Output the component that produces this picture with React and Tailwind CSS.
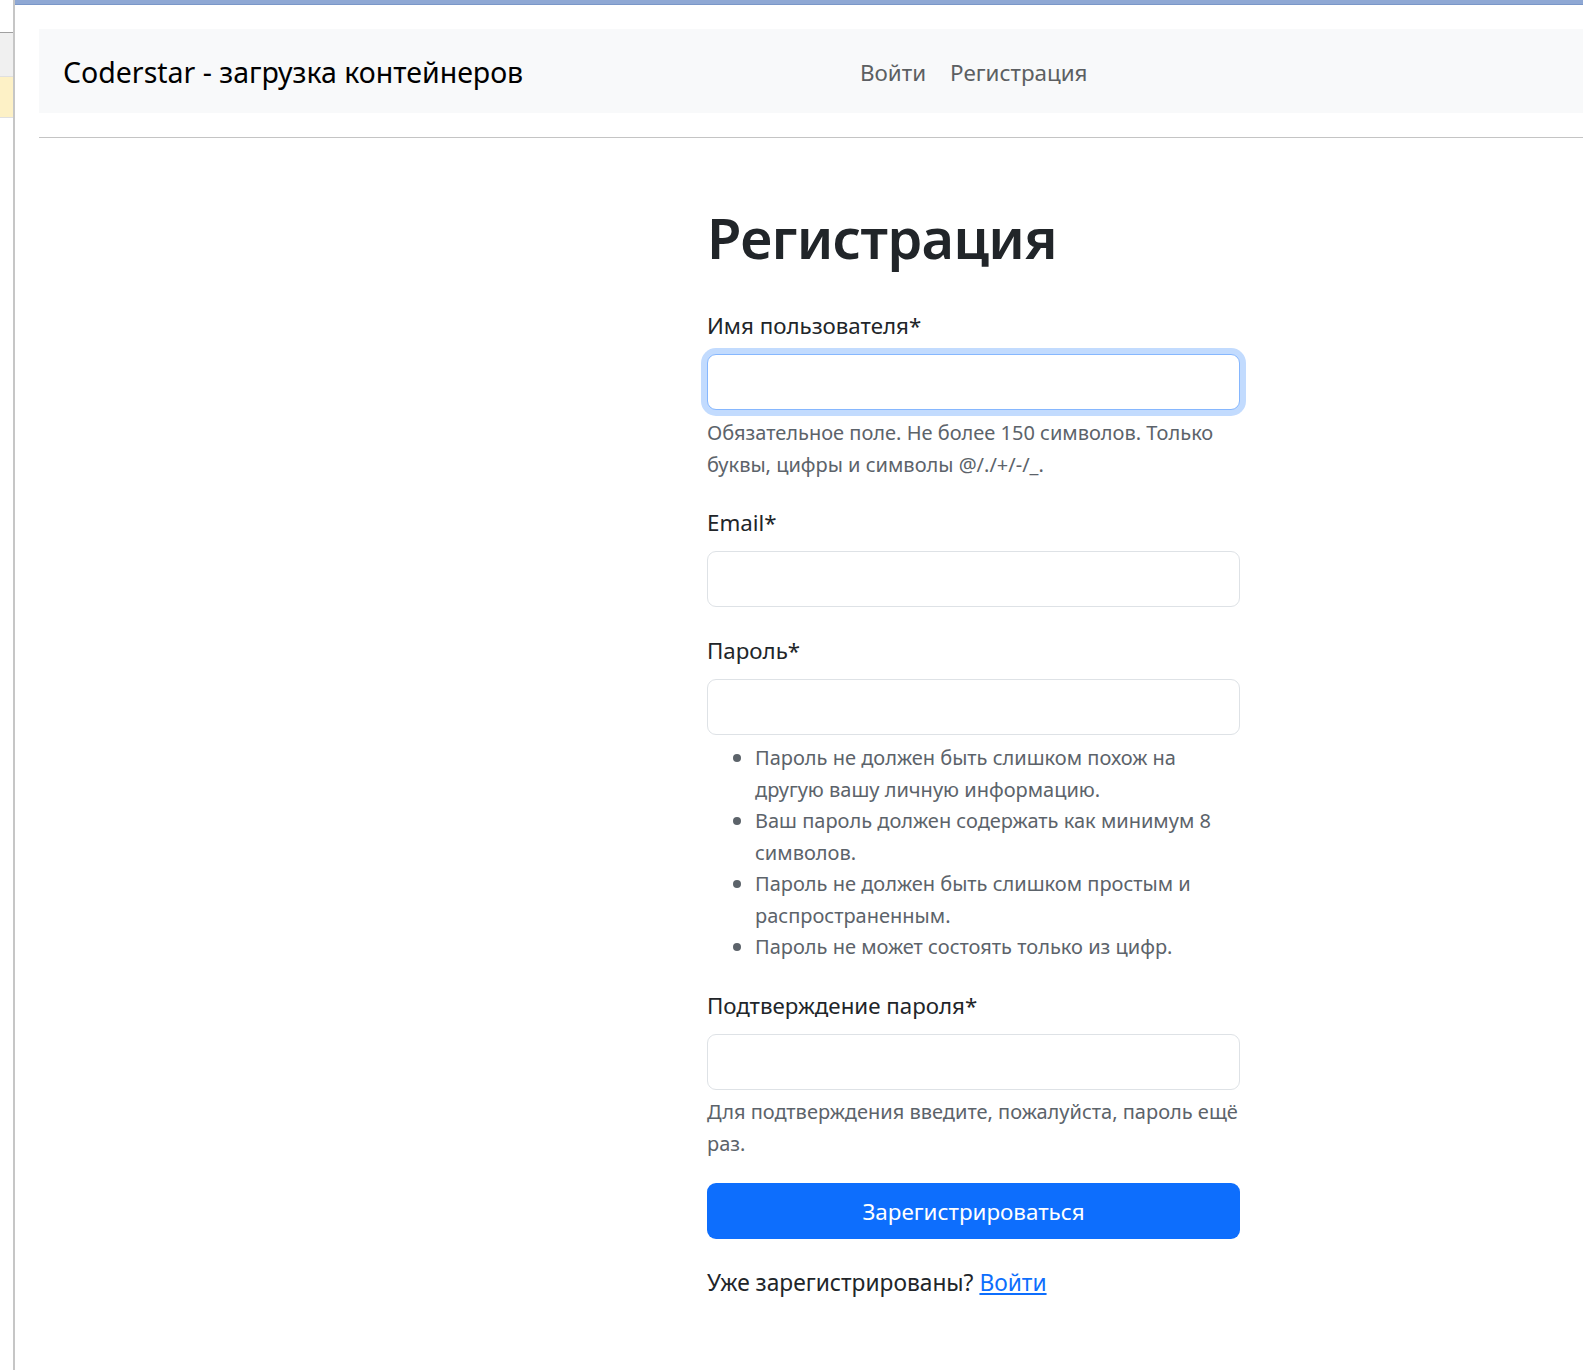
function Field({ label, focused, className = "" }) {
  return (
    <div className={className}>
      <label className="block text-[22.3px] leading-[40px] mb-[8px] text-[#212529]">{label}</label>
      <input
        className={
          focused
            ? "block w-full h-[56px] bg-white rounded-[9px] border border-[#86b7fe] shadow-[0_0_0_6px_#c2dbfe] outline-none"
            : "block w-full h-[56px] bg-white rounded-[9px] border border-[#dee2e6] outline-none"
        }
      />
    </div>
  );
}

function Hint({ children }) {
  return (
    <li className="flex">
      <span className="flex h-[31.5px] w-[48px] shrink-0 items-center pl-[26px]">
        <span className="h-[8px] w-[8px] rounded-full bg-[#5c636a]"></span>
      </span>
      <span>{children}</span>
    </li>
  );
}

export default function App() {
  return (
    <div className="relative min-h-[1370px] bg-white pl-[39px] font-['Noto_Sans','Open_Sans',sans-serif] text-[#212529]">
      <div className="absolute left-0 top-0 h-[1370px] w-[15px] border-r-2 border-[#c6c6c6] bg-white">
        <div className="mt-[32px] h-[44px] border-t border-[#a0a0a0] bg-[#f0f0f0]"></div>
        <div className="h-[42px] border-y border-[#e0e0e0] bg-[#fdf1c6]"></div>
      </div>
      <div className="absolute left-[15px] right-0 top-0 h-[5px] bg-[#8fa8d4] border-b border-[#7a97c8]"></div>

      <div className="pt-[29px]">
        <nav className="flex h-[84px] items-center bg-[#f8f9fa] pl-[24px] pt-[2px]">
          <span className="text-[28.5px] text-black w-[797px]">Coderstar - загрузка контейнеров</span>
          <a className="mt-[2px] text-[22.4px] text-[#5c5f62]">Войти</a>
          <a className="mt-[2px] ml-[24px] text-[22.4px] text-[#5c5f62]">Регистрация</a>
        </nav>
        <hr className="mt-[24px] border-t border-[#c4c4c4]" />
      </div>

      <main className="ml-[668px] w-[533px] pt-[63px]">
        <h1 className="text-[56px] leading-[72px] font-semibold tracking-[-0.7px] mb-[33px]">Регистрация</h1>
        <Field label="Имя пользователя*" focused />
        <p className="mt-[7px] text-[20px] leading-[32px] text-[#5c636a]">
          Обязательное поле. Не более 150 символов. Только буквы, цифры и символы @/./+/-/_.
        </p>
        <Field label="Email*" className="mt-[22px]" />
        <Field label="Пароль*" className="mt-[24px]" />
        <ul className="mt-[7px] text-[20px] leading-[31.5px] text-[#5c636a]">
          <Hint>Пароль не должен быть слишком похож на другую вашу личную информацию.</Hint>
          <Hint>Ваш пароль должен содержать как минимум 8 символов.</Hint>
          <Hint>Пароль не должен быть слишком простым и распространенным.</Hint>
          <Hint>Пароль не может состоять только из цифр.</Hint>
        </ul>
        <Field label="Подтверждение пароля*" className="mt-[23px]" />
        <p className="mt-[6px] text-[20px] leading-[32px] text-[#5c636a]">
          Для подтверждения введите, пожалуйста, пароль ещё раз.
        </p>
        <button className="mt-[23px] block h-[56px] w-full rounded-[9px] bg-[#0d6efd] pt-[2px] text-[22.4px] text-white">
          Зарегистрироваться
        </button>
        <p className="mt-[26px] text-[22.75px] leading-[36px]">
          Уже зарегистрированы? <a className="text-[#0d6efd] underline">Войти</a>
        </p>
      </main>
    </div>
  );
}
